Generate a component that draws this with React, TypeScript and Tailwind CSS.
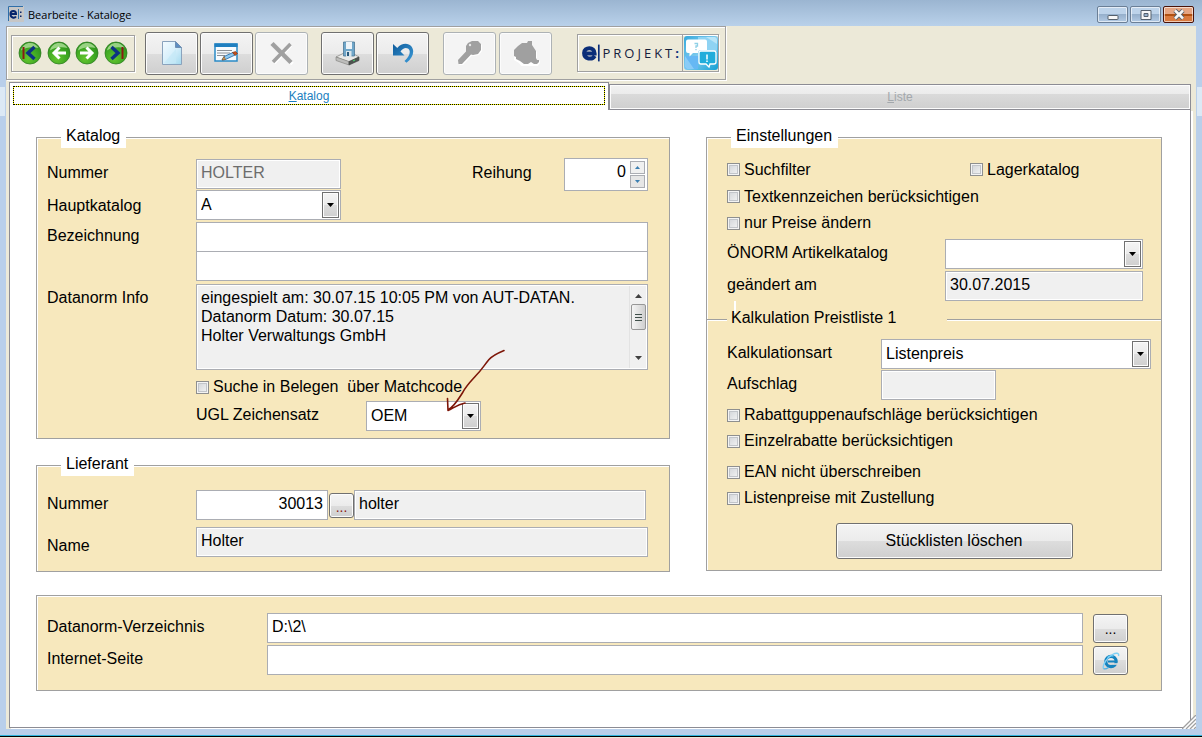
import React from "react";

const BEVEL =
  "bg-[linear-gradient(#f4f4f4,#ebebeb_50%,#dddddd_50%,#cfcfcf)] border border-[#707070] rounded-[3px] shadow-[inset_0_0_0_1px_#fcfcfc]";
const FIELD = "h-[30px] min-w-0 border border-[#abadb3] px-1 pb-[2px] text-base leading-5 text-black outline-none";
const READONLY = "bg-[#f0f0f0] shadow-[inset_0_0_0_1px_#ffffff]";

function Group({ title, className = "", children }: { title: string; className?: string; children: React.ReactNode }) {
  return (
    <fieldset className={`min-w-0 border border-[#a0a0a0] bg-[#f7e8bd] shadow-[inset_1px_1px_0_#ffffff] ${className}`}>
      <legend className="ml-[14px] h-[22px] bg-white pl-[5px] pr-[6px] leading-5">{title}</legend>
      {children}
    </fieldset>
  );
}

function Label({ htmlFor, className = "", children }: { htmlFor: string; className?: string; children: React.ReactNode }) {
  return (
    <label htmlFor={htmlFor} className={`h-[30px] shrink-0 pt-1 leading-5 whitespace-nowrap ${className}`}>
      {children}
    </label>
  );
}

function Check({ id, label, className = "" }: { id: string; label: string; className?: string }) {
  return (
    <div className={`flex items-center gap-1 ${className}`}>
      <input
        id={id}
        type="checkbox"
        className="size-[13px] shrink-0 appearance-none border border-[#8e8f8f] bg-[linear-gradient(135deg,#cfd2d6,#f6f6f6)] shadow-[inset_0_0_0_1px_#f4f4f4,inset_0_0_0_2px_#c2c5ca] checked:bg-[#4b6a99]"
      />
      <label htmlFor={id} className="leading-5 whitespace-pre">
        {label}
      </label>
    </div>
  );
}

function Combo({ id, options, className = "", children }: { id: string; options: string[]; className?: string; children?: React.ReactNode }) {
  return (
    <div className={`relative ${className}`}>
      <select id={id} className={`${FIELD} w-full appearance-none bg-white pb-0!`}>
        {options.map((o) => (
          <option key={o}>{o}</option>
        ))}
      </select>
      <span className="pointer-events-none absolute top-[2px] right-[2px] flex h-[26px] w-[17px] items-center justify-center border border-[#707070] bg-[linear-gradient(#f4f4f4,#ebebeb_50%,#dddddd_50%,#cfcfcf)] shadow-[inset_0_0_0_1px_#fcfcfc]">
        <svg width="7" height="4" viewBox="0 0 7 4" aria-hidden="true">
          <path d="M0 0h7L3.500 4z" fill="#000" />
        </svg>
      </span>
      {children}
    </div>
  );
}

function NavIcon({ kind }: { kind: "first" | "prev" | "next" | "last" }) {
  const id = `nav-${kind}`;
  return (
    <svg width="24" height="24" viewBox="0 0 24 24" aria-hidden="true">
      <defs>
        <radialGradient id={id} cx="0.4" cy="0.75" r="0.75">
          <stop offset="0" stopColor="#63c52e" />
          <stop offset="0.6" stopColor="#3fa823" />
          <stop offset="1" stopColor="#2c8f1d" />
        </radialGradient>
      </defs>
      <circle cx="12" cy="12" r="11" fill={`url(#${id})`} stroke="#2f7d22" strokeWidth="0.8" />
      <path d="M3 9.500C4 4.500 8 2 12 2s7 2 8.500 5C15 5.500 8 6 3 9.500z" fill="#b9e6a4" opacity="0.75" />
      {kind === "prev" && <path d="M12.500 6.500 7 12l5.500 5.500M7.500 12H19" fill="none" stroke="#fff" strokeWidth="3" />}
      {kind === "next" && <path d="M11.500 6.500 17 12l-5.500 5.500M16.500 12H5" fill="none" stroke="#fff" strokeWidth="3" />}
      {kind === "first" && (
        <>
          <path d="M5.500 6v12" stroke="#8a1a12" strokeWidth="2" />
          <path d="M16.500 6 10 12l6.500 6" fill="none" stroke="#0c3383" strokeWidth="3.500" />
        </>
      )}
      {kind === "last" && (
        <>
          <path d="M18.500 6v12" stroke="#8a1a12" strokeWidth="2" />
          <path d="M7.500 6 14 12l-6.500 6" fill="none" stroke="#0c3383" strokeWidth="3.500" />
        </>
      )}
    </svg>
  );
}

function PageIcon() {
  return (
    <svg width="20" height="24" viewBox="0 0 20 24" aria-hidden="true">
      <defs>
        <linearGradient id="page" x1="0" y1="0" x2="1" y2="1">
          <stop offset="0" stopColor="#f4fbff" />
          <stop offset="0.5" stopColor="#d8f0fb" />
          <stop offset="1" stopColor="#a3d9ee" />
        </linearGradient>
      </defs>
      <path d="M.5.500h13L19.500 6.500v17H.5z" fill="url(#page)" stroke="#8aa3bd" />
      <path d="M13.500.500v6h6z" fill="#5d8ec2" stroke="#6f8fb3" />
      <path d="M2 22 14 8v14z" fill="#c4e8f6" opacity="0.7" />
    </svg>
  );
}

function EditIcon() {
  return (
    <svg width="25" height="20" viewBox="0 0 25 20" aria-hidden="true">
      <path d="M1 1h22v17H1z" fill="#f7fbfe" stroke="#2a8ac6" strokeWidth="1.500" />
      <path d="M.5.500h23v3.500H.5z" fill="#1f7fc0" />
      <path d="M3 7.500h15M3 10h13M3 12.500h8" stroke="#8b9096" strokeWidth="1" />
      <path d="m8 17 2-3.500 9-4 2 2.500-9.500 4.500z" fill="#8fc8ee" stroke="#1d66a3" strokeWidth="0.800" />
      <path d="m8 17 2-3.500 1.500 3z" fill="#e9a85b" stroke="#7a4a1d" strokeWidth="0.600" />
      <path d="m18.500 9.500 3-1 2 2-2.500 2z" fill="#c4501b" stroke="#7b2c0c" strokeWidth="0.600" />
    </svg>
  );
}

function DeleteIcon() {
  return (
    <svg width="24" height="24" viewBox="0 0 24 24" aria-hidden="true">
      <path d="M3 3.500 21.500 22M20 3 3 21" transform="translate(1 1)" stroke="#fff" strokeWidth="3.500" />
      <path d="M2 2.500 21 21.500" stroke="#a0a0a0" strokeWidth="4.500" />
      <path d="M20.500 3 3 21" stroke="#a0a0a0" strokeWidth="3.500" />
    </svg>
  );
}

function SaveIcon() {
  return (
    <svg width="25" height="26" viewBox="0 0 25 26" aria-hidden="true">
      <path d="m1 17 8-4h8l7 4-10 5z" fill="#e9e9e7" stroke="#8d8d8a" strokeWidth="0.800" />
      <path d="m1 17 13 4.500V25L1 20.500z" fill="#bdbdbb" stroke="#7c7c79" strokeWidth="0.600" />
      <path d="m14 21.500 10-4.500v3.500L14 25z" fill="#4f5350" stroke="#3c3f3d" strokeWidth="0.600" />
      <path d="m18 21 2-1" stroke="#45c26a" strokeWidth="1.300" />
      <path d="M8.500 2h11v14h-11z" fill="#6fa6c9" stroke="#4a7694" strokeWidth="0.800" />
      <path d="M11 2h6v7h-6z" fill="#eef4f8" />
      <path d="M11 11h5.500v6H11z" fill="#d9e4ea" />
      <path d="M12 12h2v4h-2z" fill="#28597b" />
    </svg>
  );
}

function UndoIcon() {
  return (
    <svg width="22" height="22" viewBox="0 0 22 22" aria-hidden="true">
      <defs>
        <linearGradient id="undo" x1="0" y1="0" x2="1" y2="1">
          <stop offset="0" stopColor="#0f5c9c" />
          <stop offset="1" stopColor="#3d9bd8" />
        </linearGradient>
      </defs>
      <path d="M1 2v11.500h11.500L8.500 9.500c2-3 5-4.500 7.500-3 3.500 2.500 1.500 8.500-3.500 12.500l2 1.800C21 16 23 9 19.500 4.500 16 .5 9.500 1 5.300 6z" fill="url(#undo)" />
    </svg>
  );
}

function KeyIcon() {
  return (
    <svg width="26" height="26" viewBox="0 0 26 26" aria-hidden="true">
      <path d="M12 2.500 16 1h5l3 3v6l-3 4-5 1-2-.5L5 24H1.500L1 20l8-8.500V7z" transform="translate(1 1)" fill="#fff" />
      <path d="M11 3 15 1h6l3 3v6l-3 4-5 1-2-.5L5 24H1.500L1 20l8-8.500V6z" fill="#a0a0a0" />
      <circle cx="13" cy="5" r="1.200" fill="#e9e9e9" />
    </svg>
  );
}

function AppleIcon() {
  return (
    <svg width="28" height="26" viewBox="0 0 28 26" aria-hidden="true">
      <path d="m8 6 4-3h3l1-2h4v4l5 6v8l3 1v2l-3 4h-5l-2-1-3 2h-4l-4-5-5-3v-6z" transform="translate(0 1)" fill="#fff" />
      <path d="m6 6 4-3h5l1-2h4v4l4 6v7l1 2h2v2l-2 2h-3l-3-2-3 2h-4l-4-3-4-2v-2l-2-1v-6z" fill="#a0a0a0" />
    </svg>
  );
}

function ChatIcon() {
  return (
    <svg width="34" height="34" viewBox="0 0 34 34" aria-hidden="true">
      <defs>
        <linearGradient id="chat" x1="0" y1="0" x2="1" y2="1">
          <stop offset="0" stopColor="#35a9dc" />
          <stop offset="0.5" stopColor="#7fcbee" />
          <stop offset="1" stopColor="#12a0d4" />
        </linearGradient>
      </defs>
      <rect width="34" height="34" rx="3" fill="url(#chat)" />
      <path d="M14 1h17a2 2 0 0 1 2 2v12H14z" fill="#8fd3f3" />
      <path d="M22 1h9l2 2v5z" fill="#b9e5f8" />
      <path d="M1 20h13v13H3a2 2 0 0 1-2-2z" fill="#66b8f4" />
      <path d="M1 31V20l9 13H3z" fill="#8accf7" />
      <path d="M4 3.500h17a2 2 0 0 1 2 2V14h-6a3 3 0 0 0-3 3H9l-3.500 3.500V17H4a2 2 0 0 1-2-2V5.500a2 2 0 0 1 2-2z" fill="#fff" />
      <path d="M17 15h13a2 2 0 0 1 2 2v9a2 2 0 0 1-2 2h-4l-1 3-3-3h-5a2 2 0 0 1-2-2v-9a2 2 0 0 1 2-2z" fill="#20addb" stroke="#fff" strokeWidth="1.300" />
      <path d="M10.500 7.500h3v2.500h-1.500v2M12 13v1.300" fill="none" stroke="#8fd0e6" strokeWidth="1.300" />
      <path d="M23 18.500v5M23 24.500v1.500" stroke="#d5f2fb" strokeWidth="1.800" />
    </svg>
  );
}

function BrowserIcon() {
  return (
    <svg width="18" height="18" viewBox="0 0 18 18" aria-hidden="true">
      <circle cx="9" cy="9.500" r="5.200" fill="none" stroke="#1583bf" strokeWidth="3.200" />
      <path d="M6 9.500h9" stroke="#1583bf" strokeWidth="2" />
      <path d="M10.500 12h6" stroke="#dcdcdc" strokeWidth="1.600" />
      <path d="M5.500 5.500C7 4 9.500 3.500 11.500 4" fill="none" stroke="#5cc3f0" strokeWidth="1.500" />
      <path d="M1.500 16.500C0 13.500 5 5.500 10.500 2.500 14 .6 17.500.6 16.500 4" fill="none" stroke="#7fd0f5" strokeWidth="1.400" />
      <path d="M1.500 16.500c1.200.8 3.500 0 5-1" fill="none" stroke="#4fb2e4" strokeWidth="1.400" />
    </svg>
  );
}

const NAV: { kind: "first" | "prev" | "next" | "last"; label: string }[] = [
  { kind: "first", label: "Erster" },
  { kind: "prev", label: "Zurück" },
  { kind: "next", label: "Weiter" },
  { kind: "last", label: "Letzter" },
];

function ToolButton({ label, disabled = false, className = "", children }: { label: string; disabled?: boolean; className?: string; children: React.ReactNode }) {
  return (
    <button
      type="button"
      aria-label={label}
      disabled={disabled}
      className={`flex h-[43px] w-[53px] shrink-0 items-center justify-center ${
        disabled ? "rounded-[3px] border border-[#adb2b5] bg-[#f4f4f4] shadow-[inset_0_0_0_1px_#fcfcfc]" : BEVEL
      } ${className}`}
    >
      {children}
    </button>
  );
}

function TitleBar() {
  const frame =
    "flex h-[17px] w-[31px] items-center justify-center rounded-[2px] border shadow-[inset_0_0_0_1px_rgba(255,255,255,0.6)]";
  return (
    <header className="flex h-[26px] shrink-0 items-start bg-[linear-gradient(#9bb5d1,#b9d1ea)] pr-2 pl-2">
      <svg className="mt-[6px]" width="16" height="16" viewBox="0 0 16 16" aria-hidden="true">
        <rect width="16" height="16" fill="#c6c6c6" />
        <path d="M.5 15V.500H15" fill="none" stroke="#2f6ea8" />
        <path d="M8 10.500c-1.500 2-5.500 1.500-5.500-2.500s5.500-4 5.500 0H3" fill="none" stroke="#06246b" strokeWidth="2" />
        <path d="M10.500 3v10" stroke="#2f6ea8" />
        <path d="M12 5.500h1.500v1.500H12zM12 9.500h1.500V11H12z" fill="#06246b" />
      </svg>
      <h1 className="ml-1 flex-1 pt-[7px] font-['Open_Sans','Noto_Sans',sans-serif] text-[11px] leading-4 text-black">Bearbeite - Kataloge</h1>
      <div className="flex gap-[2px] pt-[6px]">
        <button type="button" aria-label="Minimieren" className={`${frame} border-[#6b7f96] bg-[linear-gradient(#bdd3ea_50%,#96b0cc_50%,#b2cae4)]`}>
          <svg width="12" height="12" viewBox="0 0 12 12" aria-hidden="true">
            <rect x="1" y="6.500" width="10" height="4" rx="0.500" fill="#f7f7f7" stroke="#55606c" />
          </svg>
        </button>
        <button type="button" aria-label="Maximieren" className={`${frame} border-[#6b7f96] bg-[linear-gradient(#bdd3ea_50%,#96b0cc_50%,#b2cae4)]`}>
          <svg width="12" height="10" viewBox="0 0 12 10" aria-hidden="true">
            <path d="M1 .500h10v9H1zM4 3.500v3h4v-3z" fill="#f7f7f7" fillRule="evenodd" stroke="#55606c" />
          </svg>
        </button>
        <button type="button" aria-label="Schließen" className={`${frame} border-[#4a1208] bg-[linear-gradient(#e5a583_45%,#b04f10_45%,#b04f10_58%,#d97a3f_58%)]`}>
          <svg width="14" height="11" viewBox="0 0 14 11" aria-hidden="true">
            <path d="M3 1.500 11 9.500M11 1.500 3 9.500" stroke="#55606c" strokeWidth="4.500" />
            <path d="M3 1.500 11 9.500M11 1.500 3 9.500" stroke="#f7f7f7" strokeWidth="2.500" />
          </svg>
        </button>
      </div>
    </header>
  );
}

function Toolbar() {
  return (
    <div className="flex h-[54px] w-[720px] shrink-0 items-center border border-[#a0a0a0] pl-1 shadow-[inset_1px_1px_0_#ffffff,1px_1px_0_#ffffff]">
      <nav className="flex h-[37px] w-[124px] items-center justify-around border border-[#a0a0a0] px-1 shadow-[inset_1px_1px_0_#ffffff,1px_1px_0_#ffffff]">
        {NAV.map((n) => (
          <button key={n.kind} type="button" aria-label={n.label}>
            <NavIcon kind={n.kind} />
          </button>
        ))}
      </nav>
      <ToolButton label="Neu" className="ml-[10px]"><PageIcon /></ToolButton>
      <ToolButton label="Bearbeiten" className="ml-[2px]"><EditIcon /></ToolButton>
      <ToolButton label="Löschen" disabled className="ml-[2px]"><DeleteIcon /></ToolButton>
      <ToolButton label="Speichern" className="ml-[13px]"><SaveIcon /></ToolButton>
      <ToolButton label="Rückgängig" className="ml-[2px]"><UndoIcon /></ToolButton>
      <ToolButton label="Suchen" disabled className="ml-[14px]"><KeyIcon /></ToolButton>
      <ToolButton label="Extras" disabled className="ml-[3px]"><AppleIcon /></ToolButton>
      <div className="ml-[25px] flex h-[38px] items-center border border-[#a0a0a0] shadow-[inset_1px_1px_0_#ffffff,1px_1px_0_#ffffff]">
        <div className="flex w-[104px] items-center pl-1">
          <svg width="22" height="24" viewBox="0 0 22 24" aria-hidden="true">
            <path d="M15.200 15.500c-3 5-12.700 4-12.700-3.500s12.500-8 12.500.5H5" fill="none" stroke="#0a2d78" strokeWidth="4.800" />
            <path d="M20 2v20" stroke="#0a2d78" strokeWidth="2" />
          </svg>
          <span className="pl-[2px] font-['Open_Sans',sans-serif] text-[13px] leading-5 tracking-[3px] text-[#15203c]">
            PROJEKT<b className="text-[#0a2d78]">:</b>
          </span>
        </div>
        <button type="button" aria-label="Hilfe" className="flex h-full w-[36px] items-center justify-center border-l border-[#a0a0a0]">
          <ChatIcon />
        </button>
      </div>
    </div>
  );
}

function Tabs() {
  return (
    <div role="tablist" className="grid grid-cols-[600fr_582fr] items-end">
      <button
        type="button"
        role="tab"
        aria-selected="true"
        className="h-[28px] min-w-0 border-x border-t border-[#8c8c94] bg-white px-[3px] pt-[3px] pb-[5px]"
      >
        <span className="flex h-[19px] items-center justify-center border border-[#ffff00] bg-white text-xs leading-4 text-[#1b7fc0] outline-1 -outline-offset-1 outline-black outline-dotted">
          <u>K</u>atalog
        </span>
      </button>
      <button
        type="button"
        role="tab"
        aria-selected="false"
        className="h-[26px] min-w-0 border border-[#8c8c94] bg-[linear-gradient(#f2f2f2,#ebebeb_38%,#dadada_38%,#cfcfcf)] text-xs leading-4 text-[#a3a8ac] shadow-[inset_0_0_0_1px_#fcfcfc]"
      >
        <u>L</u>iste
      </button>
    </div>
  );
}

function Katalog() {
  return (
    <Group title="Katalog" className="pr-[21px] pb-[7px] pl-[10px]">
      <div className="mt-[11px] flex">
        <Label htmlFor="nummer" className="w-[149px]">Nummer</Label>
        <input id="nummer" disabled defaultValue="HOLTER" className={`${FIELD} ${READONLY} w-[145px] text-[#6d6d6d]!`} />
        <Label htmlFor="reihung" className="ml-auto w-[92px]">Reihung</Label>
        <div className="-mt-px -mb-[2px] flex h-[33px] w-[84px] border border-[#abadb3] bg-white p-[2px]">
          <input
            id="reihung"
            type="number"
            defaultValue={0}
            className="h-[22px] min-w-0 flex-1 appearance-none pr-1 text-right text-base leading-5 outline-none [&::-webkit-inner-spin-button]:appearance-none"
          />
          <div className="flex w-[15px] flex-col gap-px">
            <button type="button" aria-label="Mehr" className="flex flex-1 items-center justify-center border border-[#abadb3] bg-[#f0f0f0]">
              <svg width="5" height="3" viewBox="0 0 5 3" aria-hidden="true"><path d="M0 3h5L2.500 0z" fill="#3c7fb1" /></svg>
            </button>
            <button type="button" aria-label="Weniger" className="flex flex-1 items-center justify-center border border-[#abadb3] bg-[#e6e6e6]">
              <svg width="5" height="3" viewBox="0 0 5 3" aria-hidden="true"><path d="M0 0h5L2.500 3z" fill="#3c7fb1" /></svg>
            </button>
          </div>
        </div>
      </div>
      <div className="mt-px flex">
        <Label htmlFor="hauptkatalog" className="w-[149px] pt-[6px]!">Hauptkatalog</Label>
        <Combo id="hauptkatalog" options={["A"]} className="w-[145px]" />
      </div>
      <div className="mt-[2px] flex">
        <Label htmlFor="bezeichnung" className="w-[149px]">Bezeichnung</Label>
        <div className="flex min-w-0 flex-1 flex-col">
          <input id="bezeichnung" className={`${FIELD} bg-white`} />
          <input aria-label="Bezeichnung 2" className={`${FIELD} -mt-px bg-white`} />
        </div>
      </div>
      <div className="mt-[3px] flex">
        <Label htmlFor="info" className="w-[149px]">Datanorm Info</Label>
        <div className={`flex h-[86px] min-w-0 flex-1 border border-[#abadb3] p-px ${READONLY}`}>
          <textarea
            id="info"
            readOnly
            className="min-w-0 flex-1 resize-none overflow-hidden bg-transparent px-[3px] pt-[2px] text-base leading-[19px] outline-none"
            defaultValue={"eingespielt am: 30.07.15 10:05 PM von AUT-DATAN.\nDatanorm Datum: 30.07.15\nHolter Verwaltungs GmbH"}
          />
          <div className="flex w-[17px] flex-col items-center border-l border-[#e3e3e3] bg-[#f0f0f0] py-2" aria-hidden="true">
            <svg width="7" height="4" viewBox="0 0 7 4"><path d="M0 4h7L3.500 0z" fill="#404040" /></svg>
            <span className="mt-[6px] flex h-[26px] w-[15px] flex-col items-center justify-center gap-[2px] rounded-[2px] border border-[#979797] bg-[linear-gradient(90deg,#f5f5f5,#cfcfcf)]">
              <i className="h-px w-[7px] bg-[#3f4f4a]" />
              <i className="h-px w-[7px] bg-[#3f4f4a]" />
              <i className="h-px w-[7px] bg-[#3f4f4a]" />
            </span>
            <svg className="mt-auto" width="7" height="4" viewBox="0 0 7 4"><path d="M0 0h7L3.500 4z" fill="#404040" /></svg>
          </div>
        </div>
      </div>
      <div className="ml-[149px]">
        <Check id="matchcode" label={"Suche in Belegen  über Matchcode"} className="mt-1 h-[26px]" />
        <div className="mt-px flex">
          <Label htmlFor="zeichensatz" className="w-[170px]">UGL Zeichensatz</Label>
          <Combo id="zeichensatz" options={["OEM"]} className="w-[115px]">
            <svg className="pointer-events-none absolute -top-[56px] left-[75px]" width="70" height="72" viewBox="0 0 70 72" aria-hidden="true">
              <path
                d="M63 5.500C57 8 52 10 48 14.500c-5 6-7 10-13 16C30 36 25 41 22 47c-4 6-8 14-15 18M6.500 53.500 7 65.500c5-2 9-6 17-7.500"
                fill="none"
                stroke="#7d1608"
                strokeWidth="1.600"
                strokeLinecap="round"
                strokeLinejoin="round"
              />
            </svg>
          </Combo>
        </div>
      </div>
    </Group>
  );
}

function Lieferant() {
  return (
    <Group title="Lieferant" className="mt-[15px] pr-[21px] pb-[14px] pl-[10px]">
      <div className="mt-[14px] flex pr-[2px]">
        <Label htmlFor="lief-nummer" className="w-[149px]">Nummer</Label>
        <input id="lief-nummer" defaultValue="30013" className={`${FIELD} w-[132px] bg-white text-right`} />
        <button type="button" aria-label="Lieferant wählen" className={`${BEVEL} mt-[3px] ml-px flex h-[25px] w-[25px] shrink-0 items-end justify-center pb-[2px] text-sm leading-4 text-[#8a1a12]`}>
          ...
        </button>
        <input aria-label="Lieferant" readOnly defaultValue="holter" className={`${FIELD} ${READONLY} flex-1`} />
      </div>
      <div className="mt-[7px] flex">
        <Label htmlFor="lief-name" className="w-[149px] pt-[9px]!">Name</Label>
        <input id="lief-name" readOnly defaultValue="Holter" className={`${FIELD} ${READONLY} flex-1`} />
      </div>
    </Group>
  );
}

function Einstellungen() {
  return (
    <Group title="Einstellungen" className="pb-[11px] [&>legend]:ml-6">
      <div className="pl-5">
        <div className="mt-2 flex">
          <Check id="suchfilter" label="Suchfilter" className="h-[27px] w-[243px]" />
          <Check id="lagerkatalog" label="Lagerkatalog" className="h-[27px]" />
        </div>
        <Check id="textkennzeichen" label="Textkennzeichen berücksichtigen" className="h-[27px]" />
        <Check id="nurpreise" label="nur Preise ändern" className="h-[26px]" />
        <div className="mt-[3px] flex pr-[18px]">
          <Label htmlFor="oenorm" className="w-[218px]">ÖNORM Artikelkatalog</Label>
          <Combo id="oenorm" options={[""]} className="flex-1" />
        </div>
        <div className="mt-[2px] flex pr-[18px]">
          <Label htmlFor="geaendert" className="w-[218px]">geändert am</Label>
          <input id="geaendert" readOnly defaultValue="30.07.2015" className={`${FIELD} ${READONLY} flex-1`} />
        </div>
      </div>
      <div className="relative flex h-9 items-center">
        <span className="h-px w-5 bg-[#a0a0a0] shadow-[0_1px_0_#ffffff]" />
        <span className="absolute top-0 left-[27px] h-3 w-[2px] bg-white" />
        <h2 className="relative ml-1 w-[216px] pb-[2px] leading-5">Kalkulation Preistliste 1</h2>
        <span className="h-px flex-1 bg-[#a0a0a0] shadow-[0_1px_0_#ffffff]" />
      </div>
      <div className="mt-[2px] pl-5">
        <div className="flex pr-[10px]">
          <Label htmlFor="kalkart" className="w-[154px]">Kalkulationsart</Label>
          <Combo id="kalkart" options={["Listenpreis"]} className="flex-1" />
        </div>
        <div className="mt-px flex">
          <Label htmlFor="aufschlag" className="w-[154px]">Aufschlag</Label>
          <input id="aufschlag" readOnly className={`${FIELD} ${READONLY} w-[115px]`} />
        </div>
        <Check id="rabattgruppen" label="Rabattguppenaufschläge berücksichtigen" className="mt-[2px] h-[26px]" />
        <Check id="einzelrabatte" label="Einzelrabatte berücksichtigen" className="h-[26px]" />
        <Check id="ean" label="EAN nicht überschreiben" className="mt-[5px] h-[26px]" />
        <Check id="zustellung" label="Listenpreise mit Zustellung" className="h-[26px]" />
      </div>
      <div className="mt-3 flex justify-center pl-10">
        <button type="button" className={`${BEVEL} h-9 w-[237px] leading-5`}>
          Stücklisten löschen
        </button>
      </div>
    </Group>
  );
}

function Verzeichnis() {
  return (
    <section className="mt-[23px] border border-[#a0a0a0] bg-[#f7e8bd] pt-[17px] pr-[33px] pb-[15px] pl-[10px] shadow-[inset_1px_1px_0_#ffffff]">
      <div className="flex">
        <Label htmlFor="verzeichnis" className="w-[220px]">Datanorm-Verzeichnis</Label>
        <input id="verzeichnis" defaultValue={"D:\\2\\"} className={`${FIELD} flex-1 bg-white`} />
        <button type="button" aria-label="Verzeichnis wählen" className={`${BEVEL} mt-px ml-[10px] flex h-[29px] w-[35px] shrink-0 items-center justify-center text-sm leading-4`}>
          ...
        </button>
      </div>
      <div className="mt-[2px] flex">
        <Label htmlFor="internet" className="w-[220px]">Internet-Seite</Label>
        <input id="internet" className={`${FIELD} flex-1 bg-white`} />
        <button type="button" aria-label="Internet-Seite öffnen" className={`${BEVEL} mt-px ml-[10px] flex h-[29px] w-[35px] shrink-0 items-center justify-center`}>
          <BrowserIcon />
        </button>
      </div>
    </section>
  );
}

export default function App() {
  return (
    <div className="flex min-h-screen flex-col bg-[#b9cfea] font-['Liberation_Sans',Arial,sans-serif] text-base text-black">
      <TitleBar />
      <div className="flex flex-1">
        <div className="w-[6px] shrink-0 pt-[61px] pr-px"><div className="h-[29px] bg-[#dce9f5]" /></div>
        <main className="relative flex min-w-0 flex-1 flex-col bg-[#ece9d8] pr-[5px] pb-px pl-[3px]">
          <div className="-ml-[3px]"><Toolbar /></div>
          <div className="mt-[2px] flex flex-1 flex-col">
            <Tabs />
            <div className="flex-1 border-x border-b border-[#8c8c94] bg-white px-[26px] pt-4 pb-9 shadow-[2px_1px_0_#ffffff]">
              <div className="grid grid-cols-[634fr_456fr] items-start gap-9 pr-[2px]">
                <div className="flex min-w-0 flex-col">
                  <Katalog />
                  <Lieferant />
                </div>
                <Einstellungen />
              </div>
              <div className="pr-[2px]"><Verzeichnis /></div>
            </div>
          </div>
          <svg className="absolute right-0 bottom-0" width="14" height="14" viewBox="0 0 14 14" aria-hidden="true">
            <path d="M0 14 14 0v14z" fill="#fff" />
            <path d="M0 14 14 0M4 14 14 4M8 14l6-6M12 14l2-2" stroke="#a0a0a0" strokeWidth="1.300" />
          </svg>
        </main>
        <div className="w-[6px] shrink-0 pt-[61px] pl-px"><div className="h-[29px] bg-[#dce9f5]" /></div>
      </div>
      <footer className="mt-[6px] h-[3px] shrink-0 border-t border-[#2fb4dc] bg-black shadow-[inset_0_-1px_0_#ece9d8]" />
    </div>
  );
}
